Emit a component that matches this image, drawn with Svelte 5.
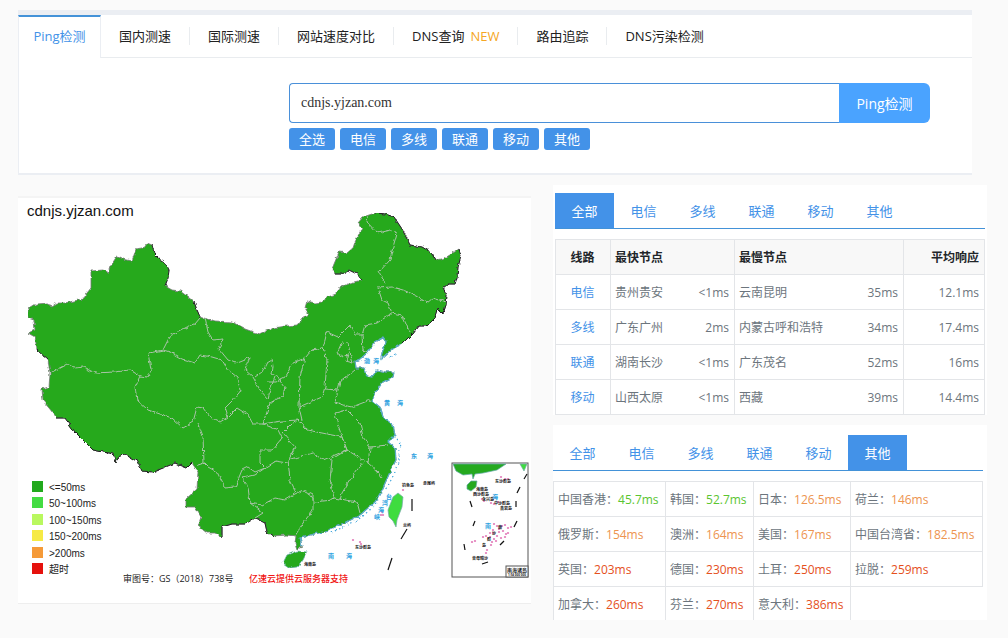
<script lang="ts">
	const navItems = [
		{ label: 'Ping检测' },
		{ label: '国内测速' },
		{ label: '国际测速' },
		{ label: '网站速度对比' },
		{ label: 'DNS查询', badge: 'NEW' },
		{ label: '路由追踪' },
		{ label: 'DNS污染检测' }
	]
	const quickLines = ['全选', '电信', '多线', '联通', '移动', '其他']
	const lines = ['全部', '电信', '多线', '联通', '移动', '其他']

	const rows = [
		{ line: '电信', fast: '贵州贵安', fastMs: '<1ms', slow: '云南昆明', slowMs: '35ms', avg: '12.1ms' },
		{ line: '多线', fast: '广东广州', fastMs: '2ms', slow: '内蒙古呼和浩特', slowMs: '34ms', avg: '17.4ms' },
		{ line: '联通', fast: '湖南长沙', fastMs: '<1ms', slow: '广东茂名', slowMs: '52ms', avg: '16ms' },
		{ line: '移动', fast: '山西太原', fastMs: '<1ms', slow: '西藏', slowMs: '39ms', avg: '14.4ms' }
	]

	const regions: [string, number][][] = [
		[['中国香港', 45.7], ['韩国', 52.7], ['日本', 126.5], ['荷兰', 146]],
		[['俄罗斯', 154], ['澳洲', 164], ['美国', 167], ['中国台湾省', 182.5]],
		[['英国', 203], ['德国', 230], ['土耳', 250], ['拉脱', 259]],
		[['加拿大', 260], ['芬兰', 270], ['意大利', 386]]
	]

	const legend = [
		{ color: '#22a91d', label: '<=50ms' },
		{ color: '#43dc43', label: '50~100ms' },
		{ color: '#b9f85f', label: '100~150ms' },
		{ color: '#f6ea45', label: '150~200ms' },
		{ color: '#f59a38', label: '>200ms' },
		{ color: '#e5110d', label: '超时' }
	]

	// province borders inside the mainland outline
	const borders = [
		'52,372 67,364 75,368 83,367 95,373 115,372 130,370 140,376 148,377 151,370 148,353 163,350 170,336 187,327 195,324 200,318',
		'205,318 208,332 213,340 223,339 219,349 228,360 235,363 250,357 245,370 253,377 260,390 268,399 270,390 275,377',
		'255,377 262,372 267,362 272,359 273,367 272,374 278,377 285,387 283,396 275,400 270,403 263,424',
		'163,350 170,352 182,359 195,363 200,355 212,357 222,360 228,370 237,377 240,390 233,400 225,408 228,417',
		'140,376 135,387 137,400 148,410 172,418 183,428 193,422 197,407 203,408 210,417 220,422 228,417 237,408 248,415 253,424 263,424 278,430 282,438 272,450 260,450 260,463 265,468',
		'197,422 203,437 204,463 198,465',
		'204,463 208,467 217,472 225,488 235,487 242,470 248,467 255,472 265,468 276,461 288,463',
		'265,468 255,475 242,478 248,487 250,503 262,505 275,498 285,500 293,495 303,490 313,495 313,510 303,523 295,536',
		'250,503 263,513 255,518',
		'288,460 290,480 295,490 293,495',
		'308,493 315,502 332,500 334,498 357,502 360,513',
		'332,460 330,480 334,498',
		'363,462 350,480 342,493 340,500',
		'293,423 283,433 295,447 288,460 313,453 323,460 347,450 342,437 307,430 298,420 293,423',
		'330,460 347,450 368,463 370,447 363,437 360,423 347,410 335,413 338,425 343,440 347,450',
		'370,447 388,445',
		'368,463 378,472 382,478',
		'263,424 282,421 298,420 305,428',
		'305,358 300,377 299,407 302,420',
		'323,348 327,360 325,387 322,397 299,407',
		'312,350 323,348 327,332 338,337 350,325 355,335 362,335 363,350 368,352',
		'337,353 342,342 348,343 350,353 343,357 337,353',
		'350,353 353,363 346,361 348,354',
		'355,370 340,382 338,390 325,389',
		'338,390 335,402 347,406 352,407 370,400',
		'312,350 305,358 293,363 285,377 275,382 267,382',
		'362,335 365,325 377,323 392,313 402,315 410,333',
		'392,313 388,303 382,300 378,288 392,287 403,290 415,295 427,303 433,298 446,302',
		'385,283 379,272 390,260 393,247 397,233 390,230 377,233 367,222 368,216'
	]

	const seas = [
		['渤', 367, 363], ['海', 376, 363],
		['黄', 387, 405], ['海', 400, 405],
		['东', 414, 458], ['海', 430, 458],
		['南', 331, 558], ['海', 349, 558],
		['海', 495, 499], ['南', 488, 528],
		['台', 389, 499], ['湾', 385, 505], ['海', 381, 512], ['峡', 377, 519]
	]

	const islands = [
		['钓鱼岛', 408, 487], ['赤尾屿', 429, 485], ['兰屿', 407, 527],
		['东沙群岛', 363, 549], ['海南岛', 310, 566],
		['东沙群岛', 503, 483], ['海南岛', 482, 491], ['西沙群岛', 481, 496],
		['永兴岛', 488, 501], ['中沙群岛', 502, 505], ['黄岩岛', 506, 510],
		['南', 500, 529], ['沙', 494, 535], ['群', 489, 541], ['岛', 484, 547],
		['曾母暗沙', 480, 560]
	]

	const dashes = [
		'M412 499v12', 'M407 529l-6 10', 'M392 558l-4 12',
		'M527 474l-3 5', 'M520 487l-3 6', 'M516 501v6', 'M517 521l-3 6',
		'M504 541l-4 4', 'M488 562l-6 2', 'M464 544l1 6', 'M475 521l-2 5', 'M470 501l2 6'
	]

	const reefs = [
		[353, 540], [360, 542], [361, 544], [403, 490], [382, 512], [383, 515], [381, 515],
		[501, 477], [505, 479], [508, 479], [482, 499], [484, 501], [491, 503], [494, 504], [498, 502],
		[494, 524], [497, 526], [502, 526], [505, 525], [508, 528], [511, 527], [503, 531], [506, 534],
		[508, 533], [505, 537], [499, 532], [497, 536], [494, 539], [490, 537], [486, 536], [483, 537],
		[475, 541], [472, 542], [492, 542], [496, 541], [491, 545], [487, 550], [486, 553], [501, 538],
		[493, 530], [490, 533], [499, 529], [493, 533]
	]

	let host = $state('cdnjs.yjzan.com')
	let activeNav = $state(0)
	let summaryTab = $state('全部')
	let regionTab = $state('其他')

	function level(ms: number) {
		if (ms < 100) return 'good'
		return ms <= 200 ? 'medium' : 'slow'
	}
</script>

{#snippet tabs(active: string, pick: (line: string) => void)}
	<div class="tabs" role="tablist">
		{#each lines as line}
			<button
				class="tab"
				class:active={line === active}
				role="tab"
				aria-selected={line === active}
				onclick={() => pick(line)}
			>{line}</button>
		{/each}
	</div>
{/snippet}

<header class="card">
	<nav class="nav">
		{#each navItems as item, i}
			<a
				href="#tool-{i}"
				class="nav-item"
				class:active={i === activeNav}
				onclick={() => (activeNav = i)}
			>
				<span>{item.label}{#if item.badge}<em>{item.badge}</em>{/if}</span>
			</a>
		{/each}
	</nav>

	<form class="search" onsubmit={(e) => e.preventDefault()}>
		<div class="search-row">
			<input class="host" type="text" aria-label="域名" bind:value={host} />
			<button class="submit" type="submit">Ping检测</button>
		</div>
		<div class="chips">
			{#each quickLines as line}
				<button class="chip" type="button">{line}</button>
			{/each}
		</div>
	</form>
</header>

<main class="content">
	<section class="map-panel">
		<svg class="map" viewBox="18 198 513 405" role="img" aria-label="Ping map">
			<defs>
				<filter id="rough" x="0" y="0" width="100%" height="100%">
					<feTurbulence type="fractalNoise" baseFrequency="0.2" numOctaves="2" seed="4" />
					<feDisplacementMap in="SourceGraphic" scale="4" xChannelSelector="R" yChannelSelector="G" />
				</filter>
			</defs>

			<g filter="url(#rough)">
				<path
					class="land"
					d="M28 318L28 309 36 304 48 303 51 307 57 303 65 303 83 299 87 293 91 288 91 271 103 270 108 273 110 267 117 256 123 259 132 261 136 249 143 248 147 243 152 245 154 253 159 258 165 262 169 270 168 278 165 286 172 290 180 291 188 297 194 302 197 310 200 317 215 321 232 322 245 329 259 334 273 328 287 326 297 325 303 318 309 314 305 308 307 301 315 303 322 302 328 297 336 294 341 287 350 283 362 280 357 274 349 270 342 274 335 274 332 269 339 252 347 253 353 248 355 242 362 228 358 223 363 217 375 213 385 214 394 217 402 229 410 245 422 247 432 253 436 260 445 258 453 253 459 249 461 256 458 267 457 277 455 284 448 284 443 288 447 295 446 305 443 314 438 309 435 318 427 326 418 326 413 333 403 343 393 348 381 359 382 353 386 342 383 338 375 342 367 353 360 359 355 361 356 368 364 368 367 376 372 377 377 370 385 372 394 372 393 377 383 382 377 390 371 400 380 407 383 417 393 425 395 435 388 442 395 448 396 460 390 472 382 490 375 502 360 515 345 523 323 532 310 535 300 537 302 547 297 549 295 543 296 536 287 535 273 536 267 532 265 523 255 518 245 524 232 524 222 527 222 537 215 533 207 533 198 526 201 517 195 507 186 507 186 499 197 489 198 472 192 463 187 468 175 463 163 468 153 472 142 471 138 462 125 454 118 457 116 462 113 454 93 450 83 440 75 432 65 418 57 418 49 408 43 401 42 389 49 387 50 373 48 360 37 350 35 337 28 333 35 330 34 320Z"
				/>
				<path
					class="frontier"
					d="M152 245L154 253 159 258 165 262 169 270 168 278 165 286M194 302L197 310 200 317M362 280L357 274 349 270 342 274 335 274M375 213L385 214 394 217 402 229 410 245 422 247 432 253 436 260M459 249L461 256 458 267 457 277 455 284 448 284 443 288 447 295 446 305 443 314 438 309 435 318 427 326 418 326 413 333 403 343M273 536L267 532 265 523 255 518 245 524 232 524 222 527 222 537M192 463L187 468 175 463 163 468 153 472 142 471 138 462 125 454 118 457 116 462 113 454 93 450 83 440 75 432 65 418 57 418M48 360L37 350"
				/>
				<path
					class="coast"
					d="M403 343L393 348 381 359 382 353 386 342 383 338 375 342 367 353 360 359 355 361 356 368 364 368 367 376 372 377 377 370 385 372 394 372 393 377 383 382 377 390 371 400 380 407 383 417 393 425 395 435 388 442 395 448 396 460 390 472 382 490 375 502 360 515 345 523 323 532 310 535 300 537 302 547"
				/>
				<path class="islets" d="M390 357l6-3M396 439l5 5-1 6M399 450v10l-4 12-6 12-4 6M377 503l-15 14-14 8-20 9" />
				{#each borders as points}
					<polyline class="border" {points} />
				{/each}
				<path class="land hainan" d="M283 563L287 555 297 551 307 552 303 560 298 567 290 568Z" />
			</g>
			<path class="taiwan" d="M398 493L403 497 402 507 397 520 396 527 393 521 389 517 388 510 393 497Z" />

			<rect class="inset" x="452" y="463" width="76" height="114" />
			<path class="land hainan" d="M453 464h53l-9 6-14 3-8 1-2 5-1-5-9 1-7-4z" />
			<path class="land hainan" d="M467 485l4-4 6 0-1 6-5 4-4-2z" />
			<path class="taiwan" d="M520 464h7l-3 7z" />
			<rect class="inset" x="506" y="566" width="22" height="11" />
			<text class="inset-title" x="517" y="572">南海诸岛</text>
			<text class="inset-scale" x="517" y="576">1:54 000 000</text>

			{#each dashes as d}
				<path class="dash" {d} />
			{/each}
			{#each reefs as [x, y]}
				<ellipse class="reef" cx={x} cy={y} rx="1.2" ry="0.8" />
			{/each}
			{#each seas as [name, x, y]}
				<text class="sea" {x} {y}>{name}</text>
			{/each}
			{#each islands as [name, x, y]}
				<text class="island" {x} {y}>{name}</text>
			{/each}

			<text class="map-title" x="27" y="216">{host}</text>
			{#each legend as item, i}
				<rect x="32" y={481 + Math.round(i * 16.4)} width="11" height="11" fill={item.color} />
				<text class="legend" x="49" y={491 + Math.round(i * 16.4)}>{item.label}</text>
			{/each}
			<text class="note" x="123" y="582">审图号：GS（2018）738号</text>
			<text class="note sponsor" x="249" y="582">亿速云提供云服务器支持</text>
		</svg>
	</section>

	<div class="side">
		<section class="panel summary">
			{@render tabs(summaryTab, (line) => (summaryTab = line))}
			<table>
				<colgroup>
					<col class="w-line" />
					<col class="w-fast" />
					<col />
					<col class="w-avg" />
				</colgroup>
				<thead>
					<tr>
						<th class="center">线路</th>
						<th>最快节点</th>
						<th>最慢节点</th>
						<th class="right">平均响应</th>
					</tr>
				</thead>
				<tbody>
					{#each rows as row}
						<tr>
							<td class="center"><a href="#{row.line}">{row.line}</a></td>
							<td><div class="node"><span>{row.fast}</span><span>{row.fastMs}</span></div></td>
							<td><div class="node"><span>{row.slow}</span><span>{row.slowMs}</span></div></td>
							<td class="right">{row.avg}</td>
						</tr>
					{/each}
				</tbody>
			</table>
		</section>

		<section class="panel regions">
			{@render tabs(regionTab, (line) => (regionTab = line))}
			<table>
				<colgroup>
					<col class="w-r1" />
					<col class="w-r2" />
					<col class="w-r3" />
					<col />
				</colgroup>
				<tbody>
					{#each regions as group}
						<tr>
							{#each group as [name, ms]}
								<td>{name}：<span class={level(ms)}>{ms}ms</span></td>
							{/each}
						</tr>
					{/each}
				</tbody>
			</table>
		</section>
	</div>
</main>

<style>
	:global(body) {
		margin: 0;
		background: #fafafa;
		color: #6c757d;
		font-family: 'Open Sans', 'Noto Sans CJK SC', sans-serif;
		font-size: 13px;
	}

	a {
		color: #4392e8;
		text-decoration: none;
	}

	button {
		border: 0;
		font: inherit;
		cursor: pointer;
	}

	.card {
		margin: 10px 36px 0 18px;
		border-top: 5px solid #ebeef3;
		border-bottom: 2px solid #ebeef3;
		background: #fff;
	}

	.nav {
		display: flex;
		height: 43px;
		box-sizing: border-box;
		border-bottom: 1px solid #e9ecef;
	}

	.nav-item {
		display: flex;
		align-items: center;
		color: #212121;
		line-height: 18px;
		white-space: nowrap;
	}

	.nav-item span {
		padding: 0 18px;
		border-right: 1px solid #e9ecef;
	}

	.nav-item:last-child span {
		border-right: 0;
	}

	.nav-item em {
		margin-left: 6px;
		color: #f5a623;
		font-style: normal;
	}

	.nav-item.active {
		justify-content: center;
		width: 83px;
		height: 43px;
		box-sizing: border-box;
		padding-bottom: 3px;
		border: 1px solid #ebeef3;
		border-top: 2px solid #4392d8;
		border-bottom: 0;
		background: #fff;
		color: #4392e8;
	}

	.nav-item.active span {
		padding: 0;
		border-right: 0;
	}

	.search {
		padding: 25px 42px 23px 270px;
		border-left: 1px solid #ebeef3;
	}

	.search-row {
		display: flex;
		height: 40px;
	}

	.host {
		flex: 1;
		min-width: 0;
		box-sizing: border-box;
		padding: 0 11px;
		border: 1px solid #4a90d9;
		border-right: 0;
		border-radius: 4px 0 0 4px;
		background: #fff;
		color: #333;
		font-family: 'Liberation Serif', serif;
		font-size: 14px;
	}

	.submit {
		width: 91px;
		padding: 0;
		border-radius: 0 6px 6px 0;
		background: #4aa3ff;
		color: #fff;
		font-size: 14px;
	}

	.chips {
		display: flex;
		gap: 5px;
		margin-top: 5px;
	}

	.chip {
		width: 46px;
		height: 22px;
		padding: 0;
		border-radius: 3px;
		background: #4392e8;
		color: #fff;
		line-height: 22px;
	}

	.content {
		display: grid;
		grid-template-columns: 513fr 434fr;
		gap: 22px;
		align-items: start;
		margin: 10px 21px 0 18px;
	}

	.map-panel {
		margin-top: 11px;
		border-top: 2px solid #f4f4f4;
		border-bottom: 1px solid #eee;
		background: #fff;
	}

	.map {
		display: block;
		width: 100%;
	}

	.land {
		fill: #25a91f;
		stroke: #777;
		stroke-width: 0.8;
	}

	.hainan {
		stroke: #6aa;
		stroke-width: 0.7;
	}

	.taiwan {
		fill: #3fdc3f;
		stroke: #7aa;
		stroke-width: 0.7;
	}

	.frontier,
	.coast,
	.border,
	.islets {
		fill: none;
	}

	.frontier {
		stroke: #222;
		stroke-width: 1;
	}

	.coast {
		stroke: #5aaec8;
		stroke-width: 1.2;
	}

	.islets {
		stroke: #42a6dc;
		stroke-width: 1.2;
		stroke-dasharray: 1.5 3;
	}

	.border {
		stroke: #a9c4a6;
		stroke-width: 1;
	}

	.inset {
		fill: #fff;
		stroke: #555;
		stroke-width: 1;
	}

	.dash {
		stroke: #111;
		stroke-width: 1.2;
	}

	.reef {
		fill: #d94fa0;
	}

	.sea,
	.island,
	.inset-title,
	.inset-scale {
		text-anchor: middle;
		font-weight: 700;
	}

	.sea {
		fill: #2b9fe0;
		font-size: 6px;
	}

	.island {
		fill: #111;
		font-size: 4px;
	}

	.inset-title {
		fill: #222;
		font-size: 5px;
	}

	.inset-scale {
		fill: #222;
		font-size: 3px;
	}

	.map-title {
		fill: #111;
		font-family: 'Liberation Sans', sans-serif;
		font-size: 15px;
	}

	.legend {
		fill: #222;
		font-family: 'Liberation Sans', 'Noto Sans CJK SC', sans-serif;
		font-size: 10px;
	}

	.note {
		fill: #222;
		font-size: 9px;
	}

	.sponsor {
		fill: #f01414;
		font-weight: 500;
	}

	.panel {
		background: #fff;
	}

	.summary {
		padding: 8px 2px 0;
	}

	.regions {
		margin-top: 10px;
		padding: 10px 4px 0 0;
	}

	.tabs {
		display: flex;
		border-bottom: 1px solid #4392d8;
	}

	.tab {
		width: 59px;
		height: 35px;
		padding: 0;
		background: none;
		color: #4392e8;
	}

	.tab.active {
		background: #4392e8;
		color: #fff;
	}

	table {
		width: 100%;
		margin-top: 10px;
		border-collapse: collapse;
		table-layout: fixed;
		font-size: 12px;
		line-height: 18px;
	}

	th,
	td {
		height: 32px;
		padding: 2px 5px 0 4px;
		border: 1px solid #e3e5e8;
		text-align: left;
		white-space: nowrap;
	}

	th {
		background: #f8f8f8;
		color: #212529;
		font-weight: 700;
	}

	.center {
		text-align: center;
	}

	.right {
		text-align: right;
	}

	.node {
		display: flex;
		justify-content: space-between;
	}

	.w-line {
		width: 55px;
	}

	.w-fast {
		width: 124px;
	}

	.w-avg {
		width: 81px;
	}

	.w-r1 {
		width: 112px;
	}

	.w-r2 {
		width: 88px;
	}

	.w-r3 {
		width: 97px;
	}

	.regions tr:last-child td {
		height: 31px;
		border-bottom: 0;
	}

	.good {
		color: #5bc531;
	}

	.medium {
		color: #ed9450;
	}

	.slow {
		color: #e5501d;
	}
</style>
